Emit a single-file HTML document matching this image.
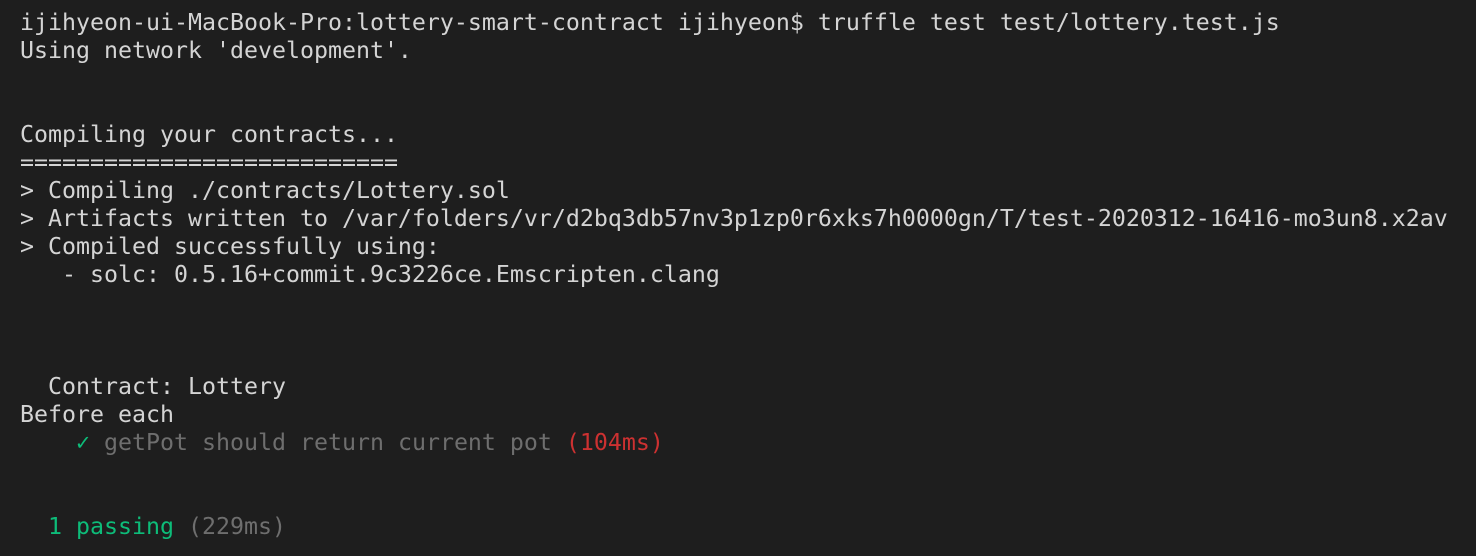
<!DOCTYPE html>
<html><head><meta charset="utf-8"><style>
html,body{margin:0;padding:0;background:#1e1e1e;}
body{width:1476px;height:556px;overflow:hidden;}
pre{margin:0;position:absolute;left:20px;top:9px;font-family:"DejaVu Sans Mono","Liberation Mono",monospace;font-size:23.25px;line-height:28px;color:#d4d4d4;white-space:pre;}
.g{color:#6e6e6e}.r{color:#cd3131}.gr{color:#0dbc79}
</style></head><body><pre>ijihyeon-ui-MacBook-Pro:lottery-smart-contract ijihyeon$ truffle test test/lottery.test.js
Using network 'development'.


Compiling your contracts...
===========================
&gt; Compiling ./contracts/Lottery.sol
&gt; Artifacts written to /var/folders/vr/d2bq3db57nv3p1zp0r6xks7h0000gn/T/test-2020312-16416-mo3un8.x2av
&gt; Compiled successfully using:
   - solc: 0.5.16+commit.9c3226ce.Emscripten.clang



  Contract: Lottery
Before each
    <span class="gr">✓</span><span class="g"> getPot should return current pot </span><span class="r">(104ms)</span>


  <span class="gr">1 passing</span><span class="g"> (229ms)</span></pre></body></html>
